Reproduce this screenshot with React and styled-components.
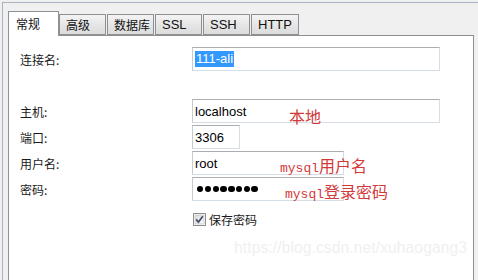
import styled, { createGlobalStyle } from "styled-components";

const GlobalStyle = createGlobalStyle`
  html, body {
    margin: 0;
    padding: 0;
    background: #f0f0f0;
  }
  #root {
    width: 478px;
    height: 280px;
    overflow: hidden;
  }
`;

const Page = styled.div`
  width: 478px;
  height: 280px;
  padding: 2px 0 0 2px;
  box-sizing: border-box;
  background: #f0f0f0;
  font-family: "Noto Sans CJK SC", "Liberation Sans", sans-serif;
`;

const Frame = styled.div`
  height: 100%;
  box-sizing: border-box;
  border-top: 1px solid #a9b4c2;
  border-left: 1px solid #a9b4c2;
  padding: 8px 4px 0 5px;
  display: flex;
  flex-direction: column;
`;

const TabBar = styled.div`
  display: flex;
  align-items: flex-end;
  height: 24px;
  position: relative;
  z-index: 1;
`;

const Tab = styled.div`
  box-sizing: border-box;
  width: ${(p) => p.w}px;
  height: ${(p) => (p.active ? 25 : 21)}px;
  margin-bottom: ${(p) => (p.active ? -1 : 0)}px;
  margin-left: ${(p) => (p.gap ? 1 : 0)}px;
  padding: ${(p) => (p.active ? "3px 0 0 7px" : "1px 0 0 6px")};
  border: 1px solid #8d9095;
  border-bottom: ${(p) => (p.active ? "none" : "1px solid #8d9095")};
  background: ${(p) =>
    p.active ? "#ffffff" : "linear-gradient(#f4f4f4, #e6e6e6 50%, #dcdcdc)"};
  line-height: 17px;
  color: #111;
  font-family: ${(p) =>
    p.latin
      ? '"Liberation Sans", sans-serif'
      : '"Noto Sans CJK SC", sans-serif'};
  font-size: ${(p) => (p.latin ? 13 : 12)}px;
`;

const Panel = styled.div`
  flex: 1;
  position: relative;
  background: #ffffff;
  border: 1px solid #8e8f8f;
  border-bottom: none;
  padding: 11px 0 0 11px;
`;

const Form = styled.div`
  display: grid;
  grid-template-columns: 172px 1fr;
  grid-auto-rows: 24px;
  row-gap: 2px;
  align-items: center;
`;

const Label = styled.div`
  font-size: 12px;
  color: #1a1a1a;
`;

const Spacer = styled.div`
  grid-column: 1 / span 2;
`;

const Field = styled.div`
  box-sizing: border-box;
  width: ${(p) => p.w}px;
  height: 24px;
  border: 1px solid #d5dde6;
  border-top-color: #abadb3;
  border-left-color: #c6ccd4;
  background: #fff;
  padding: 0 0 0 2px;
  display: flex;
  align-items: center;
  font-family: "Liberation Sans", sans-serif;
  font-size: 13px;
  color: #000;
`;

const Selected = styled.span`
  background: #3399ff;
  color: #fff;
  line-height: 16px;
  padding: 0 1px;
`;

const Dots = styled.div`
  display: flex;
  gap: 1.4px;
  padding-left: 2px;
`;

const Dot = styled.span`
  width: 6.4px;
  height: 6.4px;
  border-radius: 50%;
  background: #000;
`;

const CheckRow = styled.label`
  grid-column: 2;
  display: flex;
  align-items: center;
  gap: 3px;
  margin-top: 8px;
  margin-left: 1px;
  font-size: 12px;
  color: #1a1a1a;
`;

const Note = styled.div`
  position: absolute;
  left: ${(p) => p.x}px;
  top: ${(p) => p.y}px;
  color: #d3393a;
  font-family: "Noto Sans CJK SC", sans-serif;
  font-size: 16px;
  line-height: 20px;
  white-space: nowrap;
`;

const Mono = styled.span`
  font-family: "Liberation Mono", monospace;
  font-size: 13px;
`;

const Watermark = styled.div`
  position: absolute;
  right: 6px;
  top: 203px;
  color: #f0f0f0;
  font-family: "Liberation Sans", sans-serif;
  font-size: 15.6px;
  letter-spacing: 0.1px;
`;

const Checkbox = () => (
  <svg width="13" height="13" viewBox="0 0 13 13">
    <defs>
      <linearGradient id="cb" x1="0" y1="0" x2="1" y2="1">
        <stop offset="0" stopColor="#dcdcdc" />
        <stop offset="1" stopColor="#fbfbfb" />
      </linearGradient>
    </defs>
    <rect x="0.5" y="0.5" width="12" height="12" fill="#fff" stroke="#8f8f8f" />
    <rect x="2" y="2" width="9" height="9" fill="url(#cb)" stroke="#b8b8b8" strokeWidth="0.6" />
    <path d="M3.2 6.4 L5.4 9.2 L9.8 3.2" fill="none" stroke="#3c4d6b" strokeWidth="1.7" />
  </svg>
);

const tabs = [
  { name: "常规", w: 51, active: true },
  { name: "高级", w: 47 },
  { name: "数据库", w: 47, gap: true },
  { name: "SSL", w: 47, gap: true, latin: true },
  { name: "SSH", w: 47, gap: true, latin: true },
  { name: "HTTP", w: 48, gap: true, latin: true },
];

export default function App() {
  return (
    <Page>
      <GlobalStyle />
      <Frame>
        <TabBar>
          {tabs.map((t) => (
            <Tab key={t.name} w={t.w} active={t.active} gap={t.gap} latin={t.latin}>
              {t.name}
            </Tab>
          ))}
        </TabBar>
        <Panel>
          <Form>
            <Label>连接名:</Label>
            <Field w={248}>
              <Selected>111-ali</Selected>
            </Field>
            <Spacer />
            <Label>主机:</Label>
            <Field w={248}>localhost</Field>
            <Label>端口:</Label>
            <Field w={48}>3306</Field>
            <Label>用户名:</Label>
            <Field w={152}>root</Field>
            <Label>密码:</Label>
            <Field w={152}>
              <Dots>
                {Array.from({ length: 8 }).map((_, i) => (
                  <Dot key={i} />
                ))}
              </Dots>
            </Field>
            <CheckRow>
              <Checkbox />
              保存密码
            </CheckRow>
          </Form>
          <Note x={280} y={70}>本地</Note>
          <Note x={271} y={119}>
            <Mono>mysql</Mono>用户名
          </Note>
          <Note x={276} y={145}>
            <Mono>mysql</Mono>登录密码
          </Note>
          <Watermark>https://blog.csdn.net/xuhaogang3</Watermark>
        </Panel>
      </Frame>
    </Page>
  );
}
